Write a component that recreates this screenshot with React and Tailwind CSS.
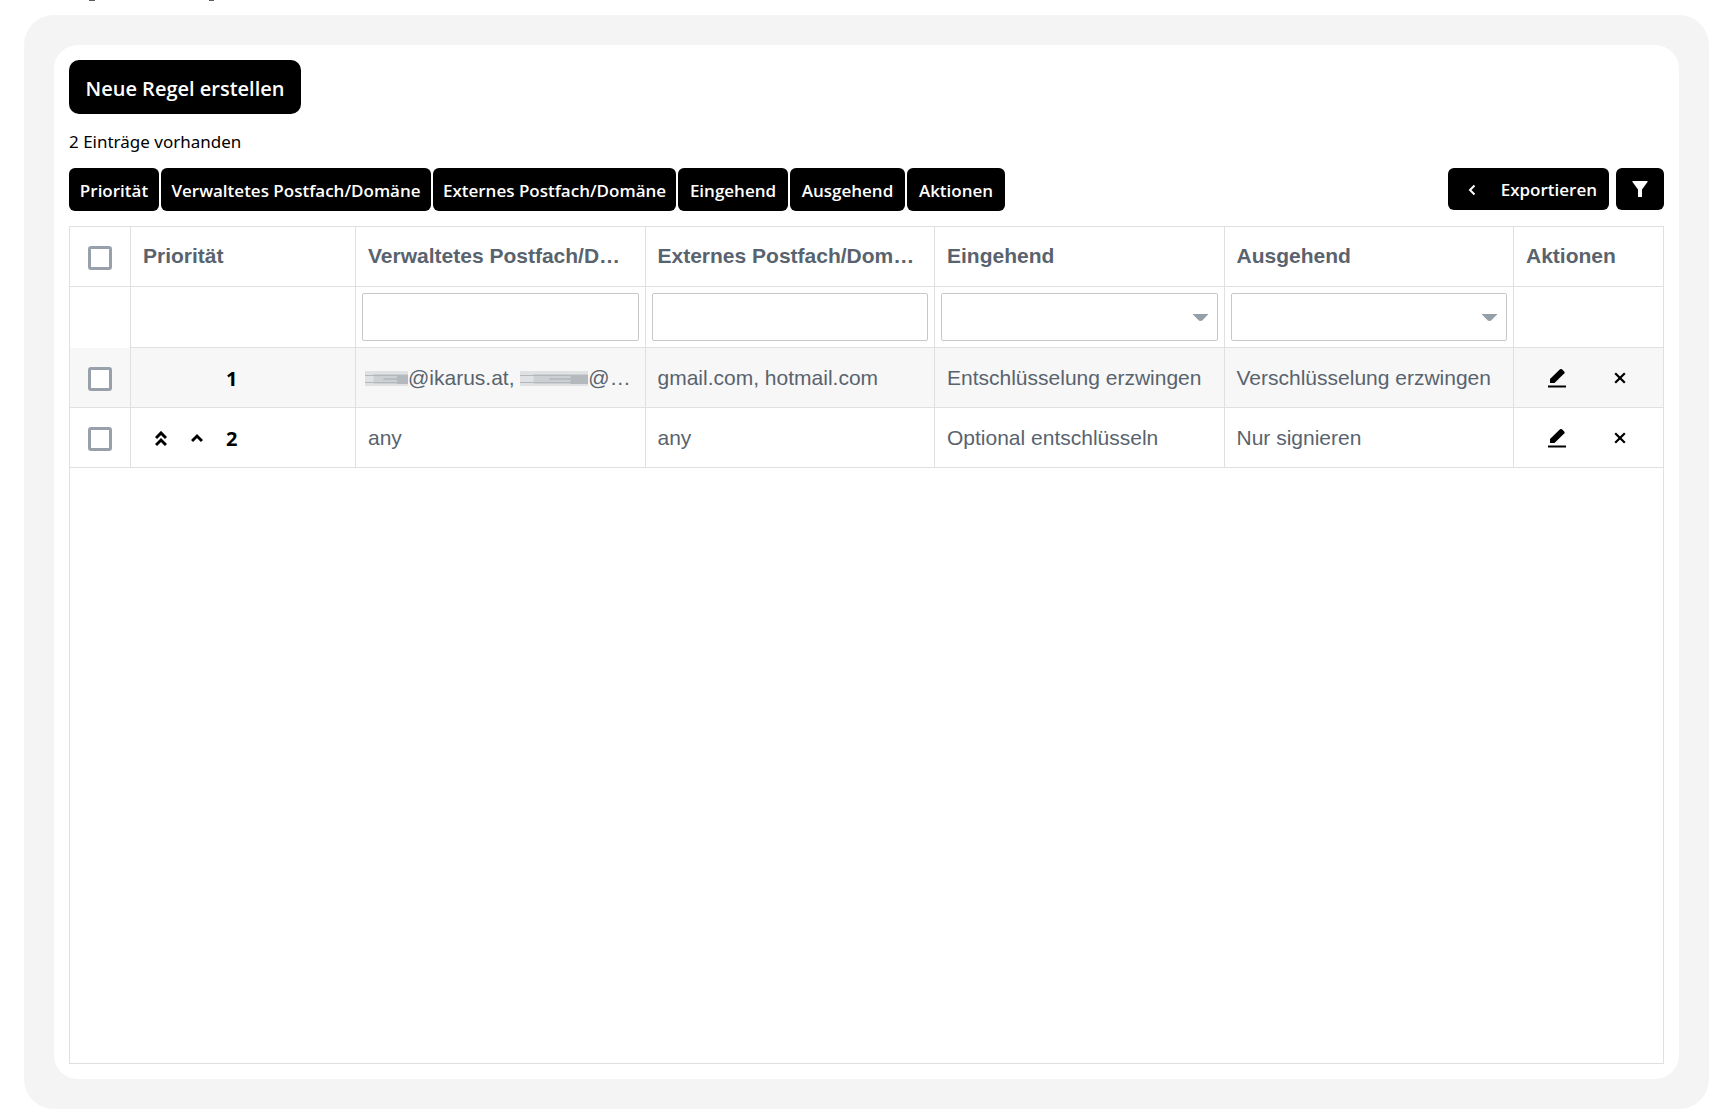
import React from "react";

const columnButtons = [
  { label: "Priorität", width: "w-[90px]" },
  { label: "Verwaltetes Postfach/Domäne", width: "w-[270px]" },
  { label: "Externes Postfach/Domäne", width: "w-[243px]" },
  { label: "Eingehend", width: "w-[110px]" },
  { label: "Ausgehend", width: "w-[115px]" },
  { label: "Aktionen", width: "w-[98px]" },
];

const headers = [
  "Priorität",
  "Verwaltetes Postfach/Domäne",
  "Externes Postfach/Domäne",
  "Eingehend",
  "Ausgehend",
  "Aktionen",
];

const rules = [
  {
    priority: 1,
    managed: (
      <>
        <Redacted className="-ml-[3px] w-[43px]" />
        @ikarus.at, <Redacted className="w-[68px]" />
        @…
      </>
    ),
    external: "gmail.com, hotmail.com",
    incoming: "Entschlüsselung erzwingen",
    outgoing: "Verschlüsselung erzwingen",
    shaded: true,
  },
  {
    priority: 2,
    managed: "any",
    external: "any",
    incoming: "Optional entschlüsseln",
    outgoing: "Nur signieren",
    movable: true,
  },
];

const cell = "border-r border-b border-[#e0e0e0] last:border-r-0";
const textCell = `${cell} truncate px-3`;

// Blacked-out part of an address
function Redacted({ className }) {
  return (
    <svg
      viewBox="0 0 70 15"
      preserveAspectRatio="none"
      className={`inline-block h-[15px] align-[-1px] ${className}`}
    >
      <path d="M0 0h70v15H0z" fill="#dfe1e2" />
      <path d="M14 3h56v10H14z" fill="#cdd0d3" />
      <path d="M0 4h70v1H0zM0 11h70v1H0z" fill="#b3b8bc" />
      <path d="M30 7h40v2H30z" fill="#b9bdc1" />
      <path d="M52 4h18v9H52z" fill="#b4b9bd" />
    </svg>
  );
}

function Checkbox({ label }) {
  return (
    <input
      type="checkbox"
      aria-label={label}
      className="block size-6 mx-auto appearance-none rounded-[3px] border-3 border-[#98a1ab] bg-white checked:bg-[#98a1ab]"
    />
  );
}

function FilterSelect({ label }) {
  return (
    <div className="relative">
      <select
        aria-label={label}
        className="block h-12 w-full appearance-none rounded-[2px] border border-[#c8c8c8] bg-white px-2"
      >
        <option value=""></option>
      </select>
      <svg
        viewBox="0 0 15 7"
        className="pointer-events-none absolute top-[21px] right-[10px] h-[7px] w-[15px] fill-[#959fa8]"
      >
        <path d="M0 0h15v.6L9.500 6.200Q8.700 7 7.500 7T5.500 6.200L0 .6z" />
      </svg>
    </div>
  );
}

function ChevronUp({ double }) {
  return (
    <svg viewBox="0 0 12 16" className="h-4 w-3 fill-none stroke-black stroke-3">
      {double ? <path d="M1 7l5-5 5 5M1 14l5-5 5 5" /> : <path d="M1 10l5-5 5 5" />}
    </svg>
  );
}

function EditIcon() {
  return (
    <svg viewBox="0 0 20 20" className="h-5 w-5 fill-black">
      <path d="M3 15v-4L13 1.3Q14 .5 15 1.3L17.4 3.7Q18 4.5 17.4 5.3L7.5 15z" />
      <path d="M1 17.5h18v2H1z" />
    </svg>
  );
}

function RuleRow({ rule }) {
  return (
    <tr className={`h-[60px] ${rule.shaded ? "bg-[#f7f7f7]" : "bg-white"}`}>
      <td className={`${cell} pt-0.5`}>
        <Checkbox label={`Regel ${rule.priority} auswählen`} />
      </td>
      <td className={cell}>
        <div className="flex items-center pt-0.5 pl-6 font-['Noto_Sans','Open_Sans',sans-serif] text-xl font-bold text-black">
          <div className="flex w-[71px] gap-6">
            {rule.movable && (
              <>
                <button type="button" aria-label="Ganz nach oben">
                  <ChevronUp double />
                </button>
                <button type="button" aria-label="Nach oben">
                  <ChevronUp />
                </button>
              </>
            )}
          </div>
          {rule.priority}
        </div>
      </td>
      <td className={textCell}>{rule.managed}</td>
      <td className={textCell}>{rule.external}</td>
      <td className={textCell}>{rule.incoming}</td>
      <td className={textCell}>{rule.outgoing}</td>
      <td className={cell}>
        <div className="flex items-center gap-[47px] pl-[33px]">
          <button type="button" aria-label="Bearbeiten">
            <EditIcon />
          </button>
          <button type="button" aria-label="Löschen">
            <svg viewBox="0 0 12 12" className="size-3 fill-none stroke-black stroke-[2.2]">
              <path d="M1.2 1.2l9.600 9.600M10.800 1.2l-9.600 9.600" />
            </svg>
          </button>
        </div>
      </td>
    </tr>
  );
}

export default function App() {
  return (
    <div className="flex min-h-screen flex-col bg-white pr-[14px] pb-[11px] pl-6 font-['Open_Sans','Noto_Sans',sans-serif] text-black">
      {/* bottom edge of the line scrolled out of view */}
      <div className="flex h-[15px] gap-[114px] pl-[65px]">
        <span className="h-px w-1.5 bg-[#5b5b66]" />
        <span className="h-px w-[5px] bg-[#5b5b66]" />
      </div>
      <div className="flex flex-1 rounded-[30px] bg-[#f4f4f4] p-[30px]">
        <main className="flex min-w-0 flex-1 flex-col rounded-3xl bg-white p-[15px]">
          <button
            type="button"
            className="h-[54px] w-[232px] rounded-[10px] bg-black pt-1 text-xl font-semibold text-white"
          >
            Neue Regel erstellen
          </button>
          <p className="mt-4 font-['Noto_Sans','Open_Sans',sans-serif] text-[17px] leading-6">
            2 Einträge vorhanden
          </p>

          <div className="mt-[14px] flex items-start justify-between">
            <div className="flex gap-[2px]">
              {columnButtons.map(({ label, width }) => (
                <button
                  key={label}
                  type="button"
                  className={`h-[43px] rounded-md bg-black pt-0.5 text-[17px] font-semibold whitespace-nowrap text-white ${width}`}
                >
                  {label}
                </button>
              ))}
            </div>
            <div className="flex gap-[7px]">
              <button
                type="button"
                className="flex h-[42px] w-[161px] items-center justify-between rounded-md bg-black pt-0.5 pr-3 pl-5 text-[17px] font-semibold text-white"
              >
                <svg viewBox="0 0 8 12" className="h-3 w-2 fill-none stroke-white stroke-2">
                  <path d="M6.5 1.5L2 6l4.500 4.500" />
                </svg>
                Exportieren
              </button>
              <button
                type="button"
                aria-label="Filter"
                className="flex h-[42px] w-12 items-center justify-center rounded-md bg-black"
              >
                <svg viewBox="0 0 16 16" className="size-4 fill-white">
                  <path d="M.8 0h14.400Q16 .1 15.500 1L10 8.500V16H6V8.500L.5 1Q0 .1.8 0z" />
                </svg>
              </button>
            </div>
          </div>

          <div className="mt-[15px] flex-1 border border-[#e0e0e0]">
            <table className="w-full table-fixed border-separate border-spacing-0 text-left font-['Liberation_Sans',Arial,sans-serif] text-[21px] text-[#59636e]">
              <colgroup>
                <col className="w-[61px]" />
                <col className="w-[225px]" />
                <col />
                <col />
                <col />
                <col />
                <col className="w-[149px]" />
              </colgroup>
              <thead>
                <tr className="h-[60px]">
                  <th className={`${cell} pt-0.5`}>
                    <Checkbox label="Alle auswählen" />
                  </th>
                  {headers.map((header) => (
                    <th key={header} scope="col" className={`${textCell} pb-0.5`}>
                      {header}
                    </th>
                  ))}
                </tr>
                <tr className="h-[61px]">
                  <td className="border-r border-[#e0e0e0]"></td>
                  <td className={cell}></td>
                  <td className={`${cell} px-1.5`}>
                    <input
                      type="text"
                      aria-label="Verwaltetes Postfach/Domäne filtern"
                      className="block h-12 w-full rounded-[2px] border border-[#c8c8c8] bg-white px-2"
                    />
                  </td>
                  <td className={`${cell} px-1.5`}>
                    <input
                      type="text"
                      aria-label="Externes Postfach/Domäne filtern"
                      className="block h-12 w-full rounded-[2px] border border-[#c8c8c8] bg-white px-2"
                    />
                  </td>
                  <td className={`${cell} px-1.5`}>
                    <FilterSelect label="Eingehend filtern" />
                  </td>
                  <td className={`${cell} px-1.5`}>
                    <FilterSelect label="Ausgehend filtern" />
                  </td>
                  <td className={cell}></td>
                </tr>
              </thead>
              <tbody>
                {rules.map((rule) => (
                  <RuleRow key={rule.priority} rule={rule} />
                ))}
              </tbody>
            </table>
          </div>
        </main>
      </div>
    </div>
  );
}
